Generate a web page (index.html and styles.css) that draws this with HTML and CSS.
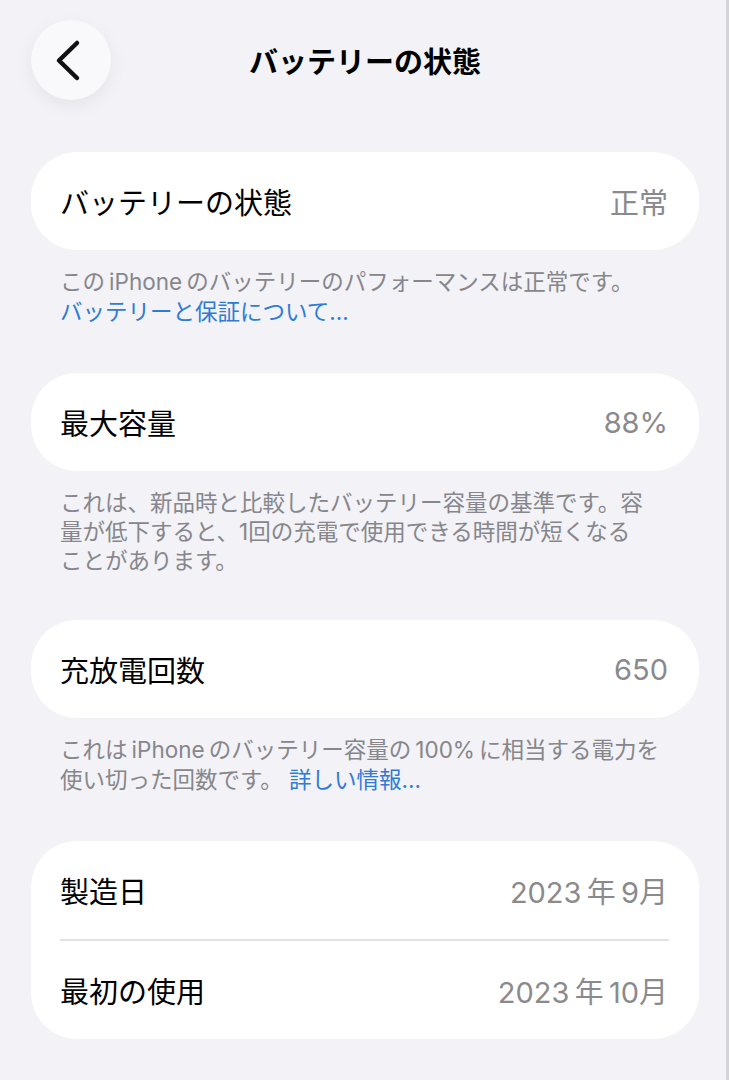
FILE: index.html
```html
<!DOCTYPE html>
<html lang="ja">
<head>
<meta charset="UTF-8">
<meta name="viewport" content="width=device-width, initial-scale=1.0">
<title>バッテリーの状態</title>
<link rel="stylesheet" href="styles.css">
</head>
<body>
<div class="page">
  <div class="header">
    <button class="back-btn" aria-label="戻る">
      <svg width="80" height="80" viewBox="0 0 80 80">
        <path d="M46 23 L28 40.5 L46 58" fill="none" stroke="#111" stroke-width="4.5" stroke-linecap="round" stroke-linejoin="round"/>
      </svg>
    </button>
    <div class="title">バッテリーの状態</div>
    <div></div>
  </div>

  <div class="card">
    <div class="row">
      <span class="label">バッテリーの状態</span>
      <span class="value">正常</span>
    </div>
  </div>
  <div class="footer">
    この&thinsp;iPhone&thinsp;のバッテリーのパフォーマンスは正常です。<br>
    <a class="link" href="#">バッテリーと保証について...</a>
  </div>

  <div class="card">
    <div class="row">
      <span class="label">最大容量</span>
      <span class="value">88%</span>
    </div>
  </div>
  <div class="footer footer-tight">
    これは、新品時と比較したバッテリー容量の基準です。容<br>
    量が低下すると、1回の充電で使用できる時間が短くなる<br>
    ことがあります。
  </div>

  <div class="card">
    <div class="row">
      <span class="label">充放電回数</span>
      <span class="value">650</span>
    </div>
  </div>
  <div class="footer">
    これは&thinsp;iPhone&thinsp;のバッテリー容量の&thinsp;100%&thinsp;に相当する電力を<br>
    使い切った回数です。 <a class="link" href="#">詳しい情報...</a>
  </div>

  <div class="card">
    <div class="row">
      <span class="label">製造日</span>
      <span class="value">2023&thinsp;年&thinsp;9月</span>
    </div>
    <div class="divider"></div>
    <div class="row">
      <span class="label">最初の使用</span>
      <span class="value">2023&thinsp;年&thinsp;10月</span>
    </div>
  </div>
</div>
</body>
</html>
```

FILE: styles.css
```css
body {
  margin: 0;
  background-color: #f2f2f7;
  font-family: Inter, "Noto Sans CJK JP", sans-serif;
}

.page {
  box-sizing: border-box;
  width: 729px;
  min-height: 1080px;
  border-right: 3px solid #d4d4d8;
}

.header {
  display: grid;
  grid-template-columns: 80px 1fr 80px;
  align-items: center;
  padding: 19px 27px 0 31px;
  height: 82px;
  margin-bottom: 51px;
}

.back-btn {
  width: 80px;
  height: 80px;
  padding: 0;
  border: none;
  border-radius: 50%;
  background-color: #f9f9fb;
  box-shadow: 0 6px 18px rgba(0, 0, 0, 0.06);
  cursor: pointer;
}

.back-btn svg {
  display: block;
}

.title {
  text-align: center;
  font-family: "Noto Sans CJK JP", sans-serif;
  font-size: 29px;
  font-weight: 700;
  color: #000;
}

.card {
  margin: 0 27px 0 31px;
  background-color: #fff;
  border-radius: 46px;
}

.row {
  display: flex;
  justify-content: space-between;
  align-items: center;
  height: 98px;
  padding: 0 31px 0 29px;
}

.label {
  font-size: 29px;
  color: #000;
}

.value {
  font-size: 29px;
  color: #8a8a8e;
}

.divider {
  height: 1.5px;
  margin: 0 30px 0 29px;
  background-color: #e2e2e5;
}

.footer {
  padding: 17px 20px 0 60px;
  margin-bottom: 47px;
  font-size: 22.5px;
  line-height: 29.5px;
  color: #86868b;
}

.footer-tight {
  line-height: 29px;
  margin-bottom: 45px;
}

.link {
  color: #2f7bd6;
  text-decoration: none;
}
```
